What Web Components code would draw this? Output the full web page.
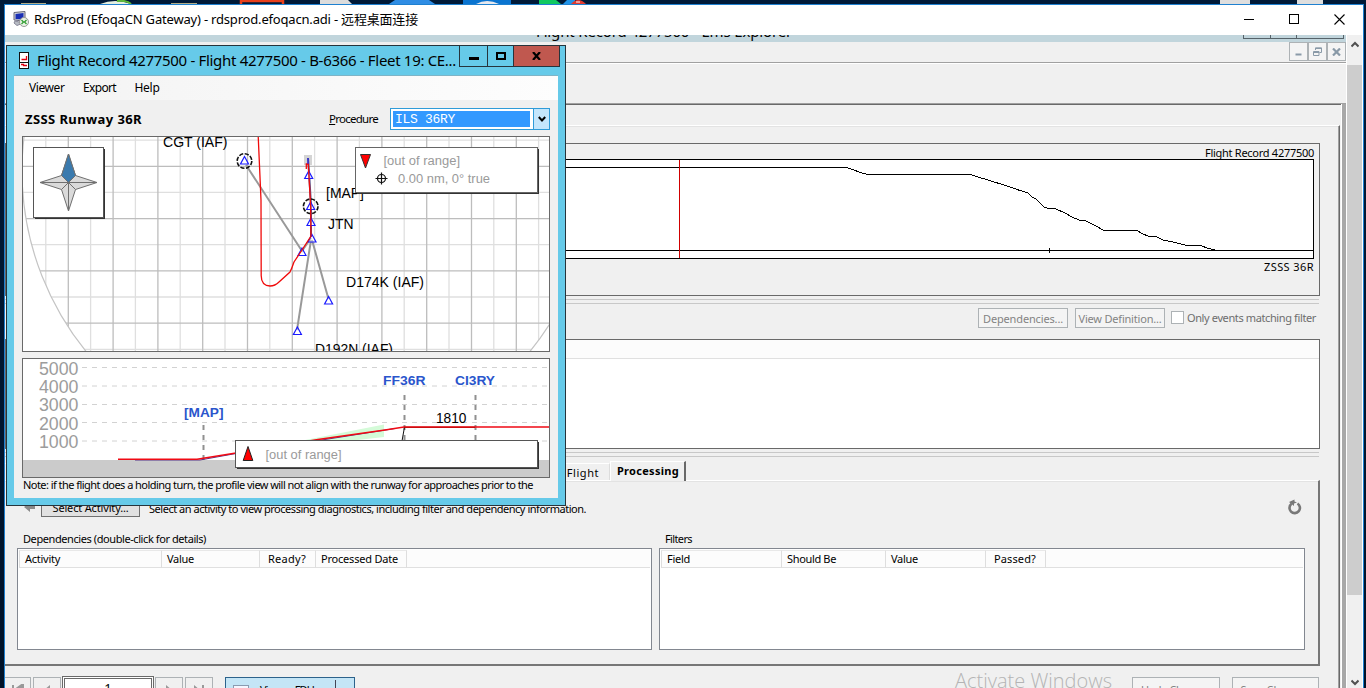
<!DOCTYPE html>
<html lang="zh-CN">
<head>
<meta charset="utf-8">
<title>RdsProd</title>
<style>
html,body{margin:0;height:100%;overflow:hidden}
body{font-family:"Noto Sans","Noto Sans CJK SC",sans-serif;font-size:11px;color:#000}
</style>
</head>
<body>
<remote-desktop></remote-desktop>
<script>
class Base extends HTMLElement{
  constructor(){super();this.attachShadow({mode:'open'});}
  connectedCallback(){this.shadowRoot.innerHTML='<style>*{box-sizing:border-box}'+this.css()+'</style>'+this.html();}
  css(){return '';} html(){return '<slot></slot>';}
}
/* a line of text spread to a given width */
customElements.define('fit-text',class extends Base{
  css(){return ':host{display:inline-block;white-space:pre;line-height:1;flex:none}span{display:inline-block}';}
  html(){return '<span><slot></slot></span>';}
  connectedCallback(){
    super.connectedCallback();
    const w=+this.getAttribute('w'),s=this.shadowRoot.querySelector('span');
    if(w){const n=this.textContent.length,cur=s.getBoundingClientRect().width;
      if(cur){s.style.letterSpacing=((w-cur)/n)+'px';this.style.width=w+'px';}}
  }
});
customElements.define('push-button',class extends Base{
  css(){return ':host{display:flex;align-items:center;justify-content:center;flex:none;height:20px;border:1px solid #adb2b5;background:#f4f4f4;color:#838383;box-sizing:border-box}';}
});
customElements.define('split-bar',class extends Base{
  css(){return ':host{display:block;flex:none;height:5px;border-top:1px solid #c8c8c8;border-bottom:1px solid #c8c8c8;box-sizing:border-box;margin-right:1px}';}
});
customElements.define('list-view',class extends Base{
  css(){return `:host{display:flex;flex-direction:column;background:#fff;border:1px solid #828790;box-sizing:border-box;height:102px}
  .h{display:flex;height:18px;margin:1px 1px 0;background:#fcfcfc;border-bottom:1px solid #e0e0e0}
  .c{border-right:1px solid #dedede;border-top:1px solid #e8e8e8;display:flex;align-items:center;padding-left:5px;padding-bottom:2px;height:18px}
  .c:first-child{border-left:1px solid #dedede;padding-left:5px}`;}
  html(){return '<div class="h">'+JSON.parse(this.getAttribute('cols')).map(c=>`<div class="c" style="width:${c[1]}px;${c[3]?'padding-left:'+c[3]+'px':''}"><fit-text w="${c[2]}">${c[0]}</fit-text></div>`).join('')+'</div>';}
});
customElements.define('scroll-bar',class extends Base{
  css(){return `:host{display:flex;flex-direction:column;width:17px;background:#f0f0f0;border:solid #fff;border-width:0 1px;box-sizing:border-box}
  .u{height:30px;display:flex;align-items:center;justify-content:center;padding-bottom:12px}.t{height:530px;background:#cdcdcd}.d{flex:1;display:flex;justify-content:center;align-items:flex-end;padding-bottom:2px}`;}
  html(){return `<div class="u"><svg width="8" height="7"><path d="M0.5 5.5L4 2L7.5 5.5" fill="none" stroke="#505050" stroke-width="2"/></svg></div><div class="t"></div><div class="d"><svg width="8" height="7"><path d="M0.5 1.5L4 5L7.5 1.5" fill="none" stroke="#505050" stroke-width="2"/></svg></div>`;}
});
customElements.define('altitude-chart',class extends Base{
  css(){return `:host{display:block;border:1px solid #696969;height:153px;box-sizing:border-box;position:relative;padding:3px 5px 0 0}
  .r{display:flex;justify-content:flex-end;height:12px;align-items:flex-start}svg{display:block;margin-left:auto}`;}
  html(){return `<div class="r"><fit-text w="109">Flight Record 4277500</fit-text></div>
  <svg width="1308" height="100" viewBox="6 159 1308 100" shape-rendering="crispEdges"><rect x="4.5" y="159.5" width="1309" height="99" fill="#fff" stroke="#000"/>
  <path d="M5 250.5H1313M1049.5 248V253M5 167.5H846L851 169L862 173L868 174.500H970L1004 185L1020 190.500L1028 193L1032 197L1036 199L1044 207L1048 208.500H1055L1065 213L1072 217L1079 220L1086 221L1096 226L1104 230.500H1137L1143 234L1149 236.500H1156L1163 240L1175 242.500L1187 245.500H1201L1207 248L1217 250.500" fill="none" stroke="#000"/><path d="M679.5 160V258" stroke="#d00000"/></svg>
  <div class="r" style="height:14px;padding-top:2px"><fit-text w="50">ZSSS 36R</fit-text></div>`;}
});
customElements.define('main-app',class extends Base{
  css(){return `:host{display:flex;flex-direction:column;width:1341px;height:653px;background:#f0f0f0;overflow:hidden;position:relative}
  .cap{height:7px;background:#c1d5dc;display:flex;overflow:hidden;flex:none;padding-left:531px;font-size:15px}
  .cap fit-text{margin-top:-11px}.cap .b{display:flex;margin-left:auto;height:4px;border:1px solid #56636a;border-top:0;width:101px;margin-right:2px}
  .cap i{border-right:1px solid #56636a;width:27px}
  .mdi{height:22px;flex:none;display:flex;justify-content:flex-end;border-bottom:1px solid #fff;box-shadow:inset 0 -1px #a0a0a0}
  .mdi b{width:19px;height:19px;border:1px solid #adb2b5;background:#f4f4f4;display:flex;align-items:center;justify-content:center}
  .body{margin-top:39px;flex:1;display:flex;border-top:1px solid #a0a0a0}
  .in{width:1336px;border-top:1px solid #696969;display:flex;flex-direction:column}
  .side{border-left:1px solid #fff;width:5px;background:#a8a8a8;margin-left:auto}
  .pg{margin-top:20px;height:563px;width:1335px;border-top:1px solid #fff;border-right:1px solid #696969;box-shadow:inset -1px 0 #a0a0a0,inset 0 1px #e3e3e3;padding:17px 19px 0 0;display:flex;flex-direction:column}
  .wrapchart{margin-bottom:3px;flex:none}
  .tools{display:flex;justify-content:flex-end;height:35px;flex:none;padding-top:4px;padding-right:4px;align-items:flex-start}
  .cb{width:13px;height:13px;border:1px solid #adb2b5;background:#fff;margin:3px 3px 0 6px}
  .ev{height:110px;border:1px solid #696969;background:#fff;margin-bottom:3px;flex:none}.ev div{height:19px;background:#fcfcfc;border-bottom:1px solid #e0e0e0}
  .tabs{height:23px;display:flex;align-items:flex-end;flex:none}
  .tab1{width:605px;height:17px;margin-bottom:0;border-top:1px solid #fff;border-right:1px solid #dcdcdc;display:flex;justify-content:flex-end;align-items:center;padding-right:10px}
  .tab2{width:76px;height:20px;border-top:1px solid #fff;border-left:1px solid #fff;border-right:2px solid #696969;display:flex;align-items:center;padding-left:6px;padding-bottom:2px;font-weight:700;margin-bottom:-1px;background:#f0f0f0;z-index:1}
  .tp{height:186px;flex:none;border-top:1px solid #fff;border-right:2px solid #777;border-bottom:2px solid #777;box-shadow:inset 0 1px #e3e3e3;display:flex;flex-direction:column}
  .act{display:flex;height:38px;padding:16px 16px 0 18px;align-items:flex-start}
  .act push-button{width:99px;background:#e1e1e1;border-color:#707070;color:#000;margin:0 9px 0 5px}
  .lb{display:flex;height:29px;align-items:center;padding:10px 0 0 18px}
  .ls{display:flex;gap:7px;padding-left:12px}
  .ft{display:flex;height:23px;align-items:flex-start;padding-top:11px;flex:none;margin-top:0}
  .n{height:20px;border:1px solid #adb2b5;display:flex;justify-content:center;align-items:flex-start;padding-top:6px;flex:none}
  .pgn{width:92px;height:22px;margin:-1px 1px 0 1px;border:1px solid #696969;background:#fff;box-shadow:inset 0 0 0 1px #fff,inset 0 0 0 2px #696969;text-align:center;padding-top:4px;line-height:14px;font-size:13px}
  .vw{width:130px;height:22px;margin-left:12px;background:#c4e5f6;border:1px solid #2c628b;display:flex;padding:7px 0 0 7px;gap:11px}
  .wm{font:300 20px/22px "Open Sans",sans-serif;color:#b4b4b4;margin:-7px 20px 0 auto}
  .ft push-button{align-items:flex-start;padding-top:6px}`;}
  html(){return `<div class="cap"><fit-text w="256">Flight Record 4277500 - Ems Explorer</fit-text><div class="b"><i></i><i style="width:26px"></i></div></div>
  <div class="mdi"><b><svg width="7" height="9"><path d="M0.500 7.500h6" stroke="#8a9aa8" stroke-width="2"/></svg></b><b><svg width="9" height="9" fill="none" stroke="#8a9aa8"><path d="M2.500 3V.8H8.500V5.500H6.500M2 1.500h6M.5 4.500h5.500v4H.5zM.5 5.500H6"/></svg></b><b><svg width="9" height="8"><path d="M1 .5L8 7.500M8 .5L1 7.500" stroke="#8a9aa8" stroke-width="2.200"/></svg></b></div>
  <div class="body"><div class="in"><div class="pg">
   <div class="wrapchart"><altitude-chart></altitude-chart></div><split-bar></split-bar>
   <div class="tools"><push-button style="width:90px;margin-right:7px"><fit-text w="80">Dependencies...</fit-text></push-button><push-button style="width:90px"><fit-text w="83">View Definition...</fit-text></push-button><span class="cb"></span><fit-text w="129" style="color:#6d6d6d;margin-top:4px">Only events matching filter</fit-text></div>
   <div class="ev"><div></div></div><split-bar></split-bar>
   <div class="tabs"><div class="tab1"><fit-text w="90">Phases of Flight</fit-text></div><div class="tab2"><fit-text w="62">Processing</fit-text></div></div>
   <div class="tp"><div class="act"><svg width="13" height="14" style="margin-top:3px"><path d="M1 7L7 2V5H12V9H7V12Z" fill="#8a8a8a"/></svg><push-button><fit-text w="76">Select Activity...</fit-text></push-button><fit-text w="437" style="margin-top:6px">Select an activity to view processing diagnostics, including filter and dependency information.</fit-text>
    <svg width="15" height="17" viewBox="0 0 15 17" style="margin:2px 0 0 auto"><path d="M4.500 4.800A5.200 5.200 0 1 0 10.500 4.500" fill="none" stroke="#787878" stroke-width="2.600"/><path d="M2 3L7.500 0.500V2.500L10 3.500L7 4.500V7Z" fill="#787878"/></svg></div>
    <div class="lb"><fit-text w="183">Dependencies (double-click for details)</fit-text><fit-text w="27" style="margin-left:459px">Filters</fit-text></div>
    <div class="ls"><list-view style="width:635px" cols='[["Activity",143,35],["Value",98,27],["Ready?",56,38,8],["Processed Date",91,77]]'></list-view><list-view style="width:646px" cols='[["Field",121,23],["Should Be",104,49],["Value",100,27],["Passed?",60,42,8]]'></list-view></div>
   </div>
   <div class="ft"><div class="n" style="width:26px;border-left:0"><svg width="14" height="12"><path d="M2 1V11M12 0V10L5 5Z" stroke="#999" stroke-width="2" fill="#999"/></svg></div><div class="n" style="width:28px;margin-left:2px"><svg width="8" height="12"><path d="M7 1V11L1 6Z" fill="#999"/></svg></div><div class="pgn">1</div><div class="n" style="width:28px"><svg width="8" height="12"><path d="M1 1V11L7 6Z" fill="#999"/></svg></div><div class="n" style="width:28px;margin-left:2px"><svg width="12" height="12"><path d="M1 1V11L7 6ZM9 1h2V12H9z" fill="#999"/></svg></div>
    <div class="vw"><svg width="16" height="12"><rect x=".5" y=".5" width="15" height="14" fill="#f4f6ff" stroke="#8a9ab0"/><path d="M3 4H10" stroke="#b0b8d0"/><path d="M11 3h3v5h-3z" fill="#d99"/></svg><fit-text w="54" style="margin-top:-1px">View as FDU</fit-text><svg width="2" height="14" style="margin:-5px 0 0 10px"><path d="M.5 0V14" stroke="#445"/></svg></div>
    <span class="wm"><fit-text w="157">Activate Windows</fit-text></span><push-button style="width:88px"><fit-text w="70">Undo Changes</fit-text></push-button><push-button style="width:87px;margin:0 1px 0 12px"><fit-text w="70">Save Changes</fit-text></push-button></div>
  </div></div><div class="side"></div></div>`;}
});
const range=(a,b,s)=>{const r=[];for(let v=a;v<b;v+=s)r.push(v);return r;};
const tri=(x,y)=>`<path d="M${x} ${y-4}L${x+4} ${y+3.500}H${x-4}Z" fill="#fff" fill-opacity=".4" stroke="#1a1aff" stroke-width="1.200"/>`;
const fix=(x,y)=>`<circle cx="${x}" cy="${y}" r="7.300" fill="none" stroke="#111" stroke-width="1.600" stroke-dasharray="4.200 1.530"/>`;
customElements.define('plan-view',class extends Base{
  css(){return ':host{display:block;border:1px solid #696969;width:528px;height:216px;box-sizing:border-box;background:#fff}svg{display:block;font:14px "Liberation Sans",sans-serif}';}
  html(){
    const V=(a,c)=>range(a,550,44.8).map(x=>`M${x} 130V352`).join(''),H=(a)=>range(a,352,52.3).map(y=>`M20 ${y}H552`).join('');
    const t=(x,y,w,s)=>`<text x="${x}" y="${y}" textLength="${w}" lengthAdjust="spacingAndGlyphs">${s}</text>`;
    return `<svg width="526" height="214" viewBox="23 137 526 214"><defs><clipPath id="c"><circle cx="308" cy="171" r="286"/></clipPath></defs>
    <g clip-path="url(#c)" fill="none"><path d="${V(45.8)}${H(140.1)}" stroke="#dfdfdf" stroke-width="1.300"/><path d="${V(68.3)}${H(166.3)}" stroke="#bdbdbd" stroke-width="1.300"/></g>
    <circle cx="308" cy="171" r="286" fill="none" stroke="#c4c4c4" stroke-width="1.200"/>
    <rect x="304" y="155" width="8" height="10" fill="#d4d4d4"/><g fill="none" stroke="#999" stroke-width="2"><path d="M246 165L302 251L311 238M311 240L297 330M312 240L328.500 299"/></g>
    <path d="M308 158L309 172L311 205V237" stroke="#555088" stroke-width="2" fill="none"/>
    ${tri(244.5,160.5)}${fix(244.5,161)}${tri(308.7,175)}${tri(310.6,206)}${fix(310.7,206.3)}${tri(311,222)}${tri(312,238.5)}${tri(302,252)}${tri(328.6,300.5)}${tri(297.4,331)}
    <path d="M258.200 136L261 200L261.200 275Q261 285.500 270 286Q275 286 279 282L290 272Q292 268 294 262L302 250L311 236L310.600 205L308.300 164H306.300V169" fill="none" stroke="#f00a0a" stroke-width="1.300"/><path d="M308 158V164" stroke="#22f"/>
    ${t(163,147,64.5,'CGT (IAF)')}${t(326,198,38,'[MAP]')}${t(328,229,25.5,'JTN')}${t(346,287,78,'D174K (IAF)')}${t(315,353.5,78,'D192N (IAF)')}
    <rect x="35" y="149" width="70" height="70" fill="#333"/><rect x="33.5" y="147.500" width="70" height="70" fill="#fff" stroke="#555"/>
    <g stroke="#707070" fill="#dadada"><path d="M68.500 154L75.500 175.500L97 182.500L75.500 189.500L68.500 211L61.500 189.500L40 182.500L61.500 175.500Z"/><path d="M68.500 182.500L61.500 175.500L68.500 154L75.500 175.500Z" fill="#3a7aae"/><path d="M40 182.500H97M68.500 182.500V211M61.500 189.500L68.500 182.500L75.500 189.500" fill="none"/></g>
    <rect x="357" y="149" width="182" height="45" fill="#333"/><rect x="355.500" y="147.500" width="182" height="45" fill="#fff" stroke="#666"/>
    <path d="M360.500 154.500H370.500L365.500 168Z" fill="#f00" stroke="#333"/><g fill="none" stroke="#111" stroke-width="1.200"><circle cx="381.500" cy="178.500" r="4"/><path d="M375.500 178.500H387.500M381.500 172.500V184.500"/></g>
    <g fill="#9a9a9a" font-size="12.500">${t(383.5,165,76.5,'[out of range]')}${t(398,183,92,'0.00 nm, 0° true')}</g></svg>`;}
});
customElements.define('profile-view',class extends Base{
  css(){return ':host{display:block;border:1px solid #696969;width:528px;height:120px;box-sizing:border-box;background:#fff}svg{display:block;font:14px "Liberation Sans",sans-serif}';}
  html(){
    const t=(x,y,w,s)=>`<text x="${x}" y="${y}" textLength="${w}" lengthAdjust="spacingAndGlyphs">${s}</text>`;
    return `<svg width="526" height="118" viewBox="23 359 526 118"><rect x="23" y="460" width="526" height="17" fill="#cbcbcb"/>
    <path d="M82 367.500H549M82 386H549M82 404.500H549M82 422.500H549M82 441H549" stroke="#d2d2d2" stroke-dasharray="5 5"/>
    <g fill="#9c9c9c" font-size="17.500">${[5,4,3,2,1].map((n,i)=>t(39,374.500+i*18.4,39.5,n+'000')).join('')}</g>
    <path d="M290 443L384 424.500V437L340 442Z" fill="#d4fbd8"/>
    <path d="M203.500 425V460M404.500 395V440M475.500 395V440" stroke="#909090" stroke-width="2" stroke-dasharray="5 5"/><path d="M404.500 427L402 441" stroke="#111"/>
    <path d="M135 460H200L236 453.500L395 428.500" stroke="#553388" stroke-width="1" fill="none"/><path d="M118 459.300H197L236 453L318 439.500L385 430L404 427H549" fill="none" stroke="#f00a14" stroke-width="1.500"/><path d="M404 427.300H475" stroke="#c00000"/>
    <g fill="#2a55cc" font-weight="700" font-size="13.500">${t(184,417,39.5,'[MAP]')}${t(383,385,42.5,'FF36R')}${t(455,385,40,'CI3RY')}</g>${t(436,422.5,30.5,'1810')}
    <rect x="237" y="442" width="302" height="27" fill="#333"/><rect x="235.500" y="440.500" width="302" height="27" fill="#fff" stroke="#555"/><path d="M248 446.500L252.800 460.500H243.200Z" fill="#f00" stroke="#222"/><g fill="#9a9a9a" font-size="12.500">${t(265.5,459,76,'[out of range]')}</g></svg>`;}
});
customElements.define('flight-window',class extends Base{
  css(){return `:host{display:flex;flex-direction:column;width:560px;height:461px;border:1px solid #26343c;background:#66cae9;box-sizing:border-box}
  .t{height:29px;display:flex;align-items:flex-start;padding-left:12px;font-size:15px;flex:none}
  .t>svg{margin-top:6px}.t fit-text{margin:7px 0 0 8px}
  .b{display:flex;border:1px solid #26343c;border-top:0;height:21px;margin-left:3px}.b span{width:28px;display:flex;align-items:center;justify-content:center;border-right:1px solid #26343c}
  .b span+span{width:26px}.b span:last-child{width:45px;background:#c0584f;border:0}
  .c{margin:0 7px 0 7px;height:423px;background:#f0f0f0;display:flex;flex-direction:column;border-top:1px solid #7fb4c6}
  .m{height:24px;background:linear-gradient(90deg,#f3f3f3,#fdfdfd);display:flex;align-items:center;padding-left:15px;font-size:12px;gap:18.5px;flex:none}
  .p{display:flex;height:36px;align-items:center;padding:2px 8px 0 11px;flex:none}
  .cb{width:160px;height:22px;border:1px solid #2f9bd8;background:#fff;display:flex;margin-left:12px;padding:2px 0 2px 2px}
  .cb b{flex:1;background:#39f;color:#fff;font:13px "Liberation Mono",monospace;padding-left:2px;display:flex;align-items:center;margin-right:3px}
  .cb i{width:16px;margin:-2px 0;background:#c4e6fc;border-left:1px solid #2f9bd8;display:flex;align-items:center;justify-content:center}
  plan-view,profile-view{margin-left:8px;flex:none}profile-view{margin-top:6px}
  .n{margin:0 0 0 9px;display:flex;padding-top:1px}`;}
  html(){return `<div class="t"><svg width="10" height="17"><rect x=".5" y=".5" width="9" height="16" fill="#fff" stroke="#111"/><path d="M0 10.500H10" stroke="#111"/><path d="M2.500 7.500H7.500V4M2 12.500H4.500V13.500H8" stroke="#e00010" stroke-width="1.300" fill="none"/></svg>
  <fit-text w="419">Flight Record 4277500 - Flight 4277500 - B-6366 - Fleet 19: CE...</fit-text>
  <div class="b"><span><svg width="10" height="10"><path d="M0 7.500H10" stroke="#000" stroke-width="3"/></svg></span><span><svg width="10" height="8"><rect x="1" y="1" width="8" height="6" fill="none" stroke="#000" stroke-width="2"/></svg></span><span><svg width="9" height="8"><path d="M1 0L8 8M8 0L1 8" stroke="#000" stroke-width="2.200"/></svg></span></div></div>
  <div class="c"><div class="m"><fit-text w="35.5">Viewer</fit-text><fit-text w="33">Export</fit-text><fit-text w="25">Help</fit-text></div>
  <div class="p"><fit-text w="117" style="font-weight:700;font-size:13px">ZSSS Runway 36R</fit-text><fit-text w="49" style="margin-left:187px;font-size:11.5px"><u>P</u>rocedure</fit-text><div class="cb"><b><fit-text w="60">ILS 36RY</fit-text></b><i><svg width="8" height="7"><path d="M.8 1L4 4.500L7.200 1" fill="none" stroke="#000" stroke-width="2"/></svg></i></div></div>
  <plan-view></plan-view><profile-view></profile-view>
  <div class="n"><fit-text w="510">Note: if the flight does a holding turn, the profile view will not align with the runway for approaches prior to the</fit-text></div></div>`;}
});
customElements.define('remote-desktop',class extends Base{
  css(){return `:host{display:flex;flex-direction:column;width:1366px;height:688px;background:linear-gradient(#001a38,#001228);overflow:hidden}
  .top{height:4px;flex:none;display:block}
  .w{margin:0 2px 0 4px;flex:1;border:1px solid #1e80d0;border-bottom:0;background:#fff;display:flex;flex-direction:column;position:relative}
  .t{height:30px;display:flex;align-items:center;padding:0 18px 0 8px;font-size:13px;flex:none}
  .t fit-text{margin:-1px 0 0 5px}.t .b{margin-left:auto;margin-top:-2px;display:flex;gap:35px;align-items:center}
  .r{display:flex;height:653px}scroll-bar{height:653px}
  flight-window{position:absolute;left:1px;top:40px}`;}
  html(){return `<svg class="top" width="1366" height="4"><path d="M21 3h25v1h-25zM171 3h26v1h-26z" fill="#b3ad86"/><path d="M100 4Q115-2 131 4Z" fill="#e4efe0"/><path d="M117 1Q127 0 131 4" stroke="#5dbb3a" stroke-width="2" fill="none"/><path d="M241 4V1H283V4" fill="none" stroke="#e8401c" stroke-width="2.500"/><path d="M320 0H348L352 4H320Z" fill="#dcdcdc"/><path d="M389 4L395 0H429L435 4Z" fill="#2f8de4"/><path d="M463 0h48v4h-48z" fill="#0a74d0"/><path d="M476 4Q487-2 499 4Z" fill="#e6e8ee"/><path d="M539 0h17l5 4h-22z" fill="#10c860"/><path d="M563 4L567 0H575V4Z" fill="#2094e8"/><path d="M571 4Q578-4 586 4Z" fill="#e03a30"/><path d="M576 2h4" stroke="#fff"/><path d="M1220 0h30v4h-30zM1297 0h26v4h-26z" fill="#dedede"/></svg>
  <div class="w"><div class="t"><svg width="16" height="16" style="margin-top:-2px"><path d="M1 1.500L12 .5V10L1 9Z" fill="#cfd3dc" stroke="#667"/><path d="M2.500 3L10.500 2V8.500L2.500 8Z" fill="#1a2fb4"/><path d="M2 10L10 12L4 14.500L1 12Z" fill="#b8bcc4" stroke="#889"/><circle cx="11" cy="11" r="4.500" fill="#eaf4e6" stroke="#999"/><path d="M8.500 9L10.500 11L8.500 13M13.500 9L11.500 11L13.500 13" fill="none" stroke="#2a9a2a" stroke-width="1.200"/></svg><fit-text w="384">RdsProd (EfoqaCN Gateway) - rdsprod.efoqacn.adi - 远程桌面连接</fit-text>
  <div class="b"><svg width="10" height="10"><path d="M0 5.500H10" stroke="#000"/></svg><svg width="10" height="10"><rect x=".5" y=".5" width="9" height="9" fill="none" stroke="#000"/></svg><svg width="11" height="11"><path d="M.5 .5L10.500 10.500M10.500 .5L.5 10.500" stroke="#000" stroke-width="1.100"/></svg></div></div>
  <div class="r"><main-app></main-app><scroll-bar></scroll-bar></div><flight-window></flight-window></div>`;}
});
</script>
</body>
</html>
